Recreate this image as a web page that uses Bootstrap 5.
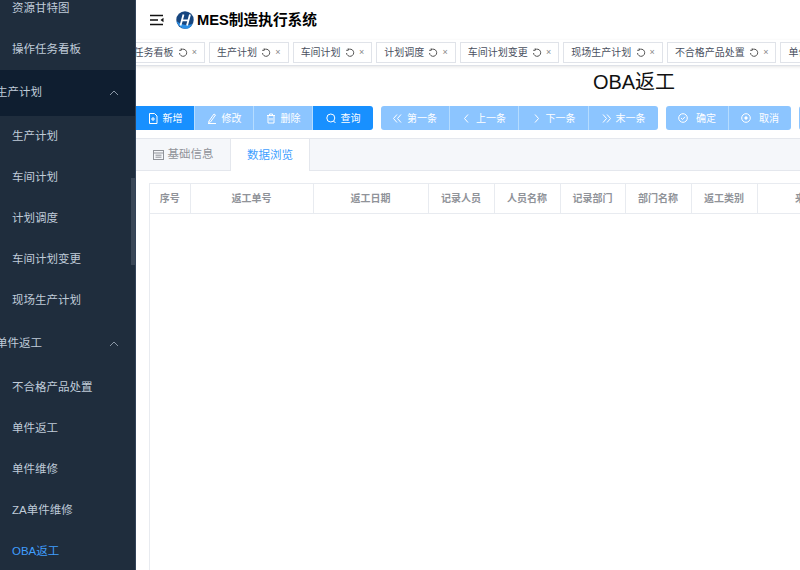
<!DOCTYPE html>
<html lang="en">
<head>
  <meta charset="UTF-8">
  <meta name="viewport" content="width=device-width, initial-scale=1">
  <title>OBA返工</title>
  <link href="https://cdn.jsdelivr.net/npm/bootstrap@5.3.0/dist/css/bootstrap.min.css" rel="stylesheet">
  <style>
    html, body { height: 100%; overflow: hidden; }
    body { font-family: "Liberation Sans", "Noto Sans CJK SC", sans-serif; background: #fff; }
    .side { width: 136px; height: 570px; background: #1f2d3d; border-right: 1px solid #33445a; position: relative; overflow: hidden; }
    .side-list { margin-top: -12px; }
    .side-item { height: 41px; padding-left: 12px; font-size: 11.5px; color: #bfcbd9; }
    .side-group { height: 46px; font-size: 11.5px; color: #bfcbd9; padding-right: 16px; }
    .side-group.open { background: #0f1e30; }
    .side-group span { margin-left: -4px; }
    .side-item.active { color: #409eff; }
    .side-bar { position: absolute; right: 0; top: 178px; width: 4px; height: 87px; background: #3a4757; }
    .main-wrap { width: 996px; }
    .top { height: 40px; padding-left: 14px; }
    .brand { font-size: 14.7px; font-weight: 700; color: #000; margin-left: 12px; }
    .strip { height: 26px; border-bottom: 1px solid #dfe2e8; box-shadow: 0 1px 3px rgba(0,0,0,.1); overflow: hidden; padding-top: 2px; background: #fff; }
    .strip-inner { margin-left: -30.5px; }
    .tag { height: 21px; border: 1px solid #e0e3e9; font-size: 10px; color: #495060; padding: 0 7px; margin-right: 4px; background: #fff; white-space: nowrap; flex-shrink: 0; }
    .tag .x { font-size: 9px; color: #888; margin-left: 4px; }
    .tag svg { margin-left: 4.3px; }
    h1.title { font-size: 20px; font-weight: 400; color: #111; height: 40px; margin: 0; line-height: 32px; }
    .tools { height: 24px; }
    .tool { height: 24px; font-size: 10px; color: #fff; background: #1890ff; border: 0; border-right: 1px solid #b5dcff; border-radius: 0; padding: 0; gap: 5px; }
    .tool.off { background: #8cc5ff; }
    .tool:last-child { border-right: 0; border-radius: 0 3px 3px 0; }
    .tool:first-child { border-radius: 3px 0 0 3px; }
    .tool-group { margin-right: 8px; }
    .tool-group:first-child .tool:first-child { border-radius: 0; }
    .tabs-band { height: 33px; margin-top: 8px; background: #f5f7fa; border-top: 1px solid #e4e7ed; border-bottom: 1px solid #e4e7ed; }
    .tab-a { width: 94px; height: 33px; margin-top: -1px; padding-top: 1px; font-size: 11.5px; color: #909399; gap: 4px; }
    .tab-b { width: 80px; height: 33px; margin-top: -1px; padding-top: 1px; font-size: 11.5px; color: #409eff; background: #fff; border-left: 1px solid #e4e7ed; border-right: 1px solid #e4e7ed; border-top: 1px solid #e4e7ed; }
    .grid-wrap { margin: 12px 0 0 13px; height: 400px; border-left: 1px solid #e8ebf0; }
    table.data { table-layout: fixed; width: 723px; margin: 0; border-collapse: collapse; }
    table.data th { height: 30px; padding: 0; font-size: 10px; font-weight: 700; color: #909399; text-align: center; vertical-align: middle; border: 1px solid #e8ebf0; border-left: 0; }
  </style>
</head>
<body>
<div class="d-flex">
  <!-- sidebar -->
  <aside class="side flex-shrink-0">
    <div class="side-list">
      <div class="side-item d-flex align-items-center">资源甘特图</div>
      <div class="side-item d-flex align-items-center">操作任务看板</div>
      <div class="side-group open d-flex align-items-center justify-content-between">
        <span>生产计划</span>
        <svg width="10" height="6" viewBox="0 0 10 6" fill="none" stroke="#8a97a6" stroke-width="1"><path d="M1 5l4-4 4 4"/></svg>
      </div>
      <div class="side-item d-flex align-items-center">生产计划</div>
      <div class="side-item d-flex align-items-center">车间计划</div>
      <div class="side-item d-flex align-items-center">计划调度</div>
      <div class="side-item d-flex align-items-center">车间计划变更</div>
      <div class="side-item d-flex align-items-center">现场生产计划</div>
      <div class="side-group d-flex align-items-center justify-content-between">
        <span>单件返工</span>
        <svg width="10" height="6" viewBox="0 0 10 6" fill="none" stroke="#8a97a6" stroke-width="1"><path d="M1 5l4-4 4 4"/></svg>
      </div>
      <div class="side-item d-flex align-items-center">不合格产品处置</div>
      <div class="side-item d-flex align-items-center">单件返工</div>
      <div class="side-item d-flex align-items-center">单件维修</div>
      <div class="side-item d-flex align-items-center">ZA单件维修</div>
      <div class="side-item active d-flex align-items-center">OBA返工</div>
    </div>
    <div class="side-bar"></div>
  </aside>

  <!-- main -->
  <main class="main-wrap flex-shrink-0">
    <div class="top d-flex align-items-center">
      <svg width="14" height="12" viewBox="0 0 14 12" fill="none" stroke="#111" stroke-width="1.600"><path d="M0 1.500h13M0 6h8M0 10.500h13"/><path d="M13.500 3.800L10.500 6l3 2.200z" fill="#111" stroke="none"/></svg>
      <div class="brand d-flex align-items-center">
        <svg width="18" height="18" viewBox="0 0 18 18" class="flex-shrink-0" style="margin-right:3px"><circle cx="9" cy="9" r="8.700" fill="#17467f"/><path d="M.5 10C2 15 6 18 10 17.700c3 0 5-1.700 6.500-4.700C11 15 5 14 .5 10z" fill="#2b8fe6"/><path d="M7.500 3.500L4.500 14.500M14 3.500l-3 11M5.500 9.300h7" stroke="#fff" stroke-width="1.800" fill="none"/></svg>
        MES制造执行系统
      </div>
    </div>
    <div class="strip">
      <div class="strip-inner d-flex" id="strip"></div>
    </div>
    <h1 class="title text-center">OBA返工</h1>
    <div class="tools d-flex">
      <div class="tool-group d-flex">
        <button class="tool d-flex align-items-center justify-content-center" style="width:59px"><svg width="10" height="11" viewBox="0 0 10 11" fill="none" stroke="#fff"><path d="M1.500.500h5l2.500 2.500v7.500h-7.500zM5 4v4M3 6h4"/></svg>新增</button>
        <button class="tool off d-flex align-items-center justify-content-center" style="width:59px"><svg width="10" height="11" viewBox="0 0 10 11" fill="none" stroke="#fff"><path d="M2 8l5-7 1.500 1-5 7-2 .5zM1 10.500h8"/></svg>修改</button>
        <button class="tool off d-flex align-items-center justify-content-center" style="width:59px"><svg width="10" height="11" viewBox="0 0 10 11" fill="none" stroke="#fff"><path d="M1 2.500h8M3.500 2.500v-1.500h3v1.500M2 2.500v7.500h6v-7.500M4 5v2.500M6 5v2.500"/></svg>删除</button>
        <button class="tool d-flex align-items-center justify-content-center" style="width:60px"><svg width="10" height="11" viewBox="0 0 10 11" fill="none" stroke="#fff"><circle cx="4.800" cy="5" r="4"/><path d="M7.500 8l2 2"/></svg>查询</button>
      </div>
      <div class="tool-group d-flex">
        <button class="tool off d-flex align-items-center justify-content-center" style="width:69px"><svg width="9" height="9" viewBox="0 0 9 9" fill="none" stroke="#fff"><path d="M4 .5L.5 4.500 4 8.500M8 .5L4.500 4.500 8 8.500"/></svg>第一条</button>
        <button class="tool off d-flex align-items-center justify-content-center" style="width:69px"><svg width="9" height="9" viewBox="0 0 9 9" fill="none" stroke="#fff"><path d="M6 .5L2.500 4.500 6 8.500"/></svg>上一条</button>
        <button class="tool off d-flex align-items-center justify-content-center" style="width:70px"><svg width="9" height="9" viewBox="0 0 9 9" fill="none" stroke="#fff"><path d="M3 .5l3.500 4L3 8.500"/></svg>下一条</button>
        <button class="tool off d-flex align-items-center justify-content-center" style="width:69px"><svg width="9" height="9" viewBox="0 0 9 9" fill="none" stroke="#fff"><path d="M1 .5l3.500 4L1 8.500M5 .5l3.500 4L5 8.500"/></svg>末一条</button>
      </div>
      <div class="tool-group d-flex">
        <button class="tool off d-flex align-items-center justify-content-center" style="width:63px;gap:8px"><svg width="10" height="10" viewBox="0 0 10 10" fill="none" stroke="#fff"><circle cx="5" cy="5" r="4.300"/><path d="M3 5l1.500 1.500L7 3.800"/></svg>确定</button>
        <button class="tool off d-flex align-items-center justify-content-center" style="width:62px;gap:8px"><svg width="10" height="10" viewBox="0 0 10 10" fill="none" stroke="#fff"><circle cx="5" cy="5" r="4.300"/><circle cx="5" cy="5" r="1.200" fill="#fff"/></svg>取消</button>
      </div>
      <div class="tool-group d-flex">
        <button class="tool off" style="width:60px"></button>
      </div>
    </div>
    <div class="tabs-band d-flex">
      <div class="tab-a d-flex align-items-center justify-content-center">
        <svg width="11" height="10" viewBox="0 0 11 10" fill="none" stroke="#909399"><rect x=".5" y=".5" width="10" height="9"/><path d="M.5 3h10M2.500 5.200h6M2.500 7.200h6"/></svg>基础信息
      </div>
      <div class="tab-b d-flex align-items-center justify-content-center">数据浏览</div>
    </div>
    <div class="grid-wrap">
      <table class="data">
        <colgroup>
          <col style="width:40px"><col style="width:123px"><col style="width:115px"><col style="width:66px"><col style="width:66px"><col style="width:65px"><col style="width:66px"><col style="width:66px"><col style="width:116px">
        </colgroup>
        <thead>
          <tr><th>序号</th><th>返工单号</th><th>返工日期</th><th>记录人员</th><th>人员名称</th><th>记录部门</th><th>部门名称</th><th>返工类别</th><th>来源单号</th></tr>
        </thead>
      </table>
    </div>
  </main>
</div>

<script>
  // tabs in the strip, first one is scrolled off to the left
  const tags = ["操作任务看板", "生产计划", "车间计划", "计划调度", "车间计划变更", "现场生产计划", "不合格产品处置", "单件返工"];
  const icon = '<svg width="10" height="10" viewBox="0 0 10 10" fill="none" stroke="#555"><path d="M3 1.800A3.600 3.600 0 1 1 1.500 5M3.200 .3v2h-2"/></svg>';
  const strip = document.getElementById("strip");
  tags.forEach(t => {
    const el = document.createElement("div");
    el.className = "tag d-flex align-items-center";
    el.innerHTML = t + icon + '<span class="x">×</span>';
    strip.appendChild(el);
  });
</script>
<script src="https://cdn.jsdelivr.net/npm/bootstrap@5.3.0/dist/js/bootstrap.bundle.min.js"></script>
</body>
</html>
